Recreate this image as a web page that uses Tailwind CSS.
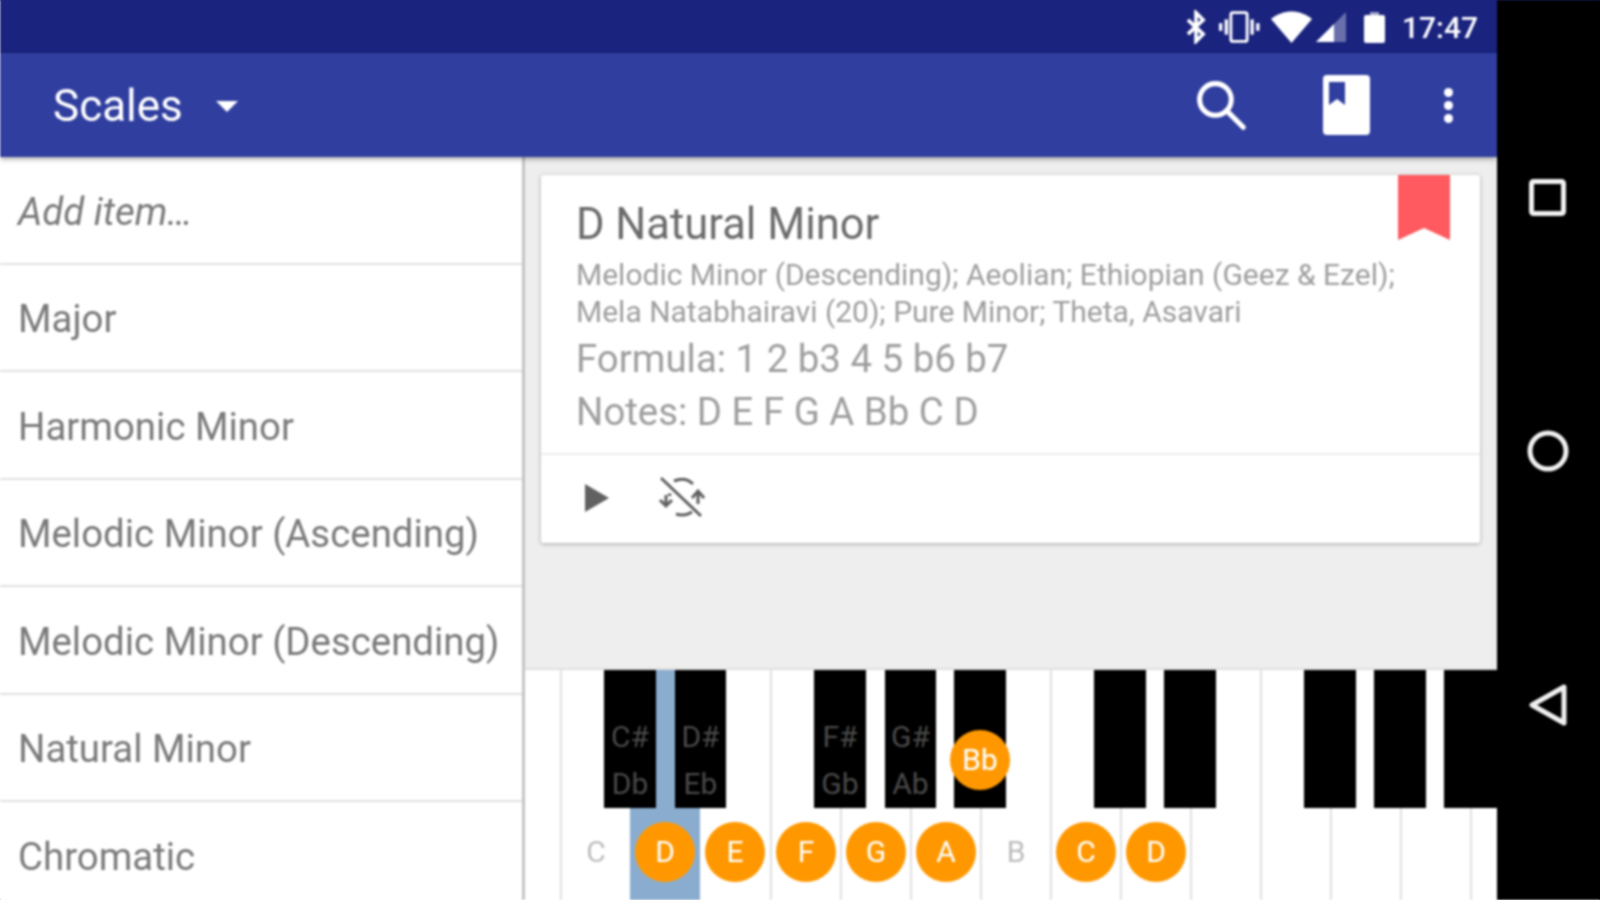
<!DOCTYPE html>
<html>
<head>
<meta charset="utf-8">
<script src="https://cdn.jsdelivr.net/npm/@tailwindcss/browser@4"></script>
</head>
<body class="h-[900px] overflow-hidden bg-black">
<div class="flex h-[900px] w-[1600px] overflow-hidden bg-black font-['Roboto',sans-serif] blur-[0.8px] shadow-[-6px_0_0_#ffffff,0_-6px_0_#1a237e,0_6px_0_#ffffff]">
  <div class="flex w-[1497px] flex-col">
    <div class="flex h-[53px] items-center justify-end bg-[#1a237e] pr-[19px] text-white">
      <svg class="mr-[11px]" width="22" height="34" viewBox="0 0 24 38" fill="none" stroke="white" stroke-width="4"><path d="M3 11 20 27 12 35V3l8 8L3 27"/></svg>
      <svg class="mr-[11px]" width="42" height="36" viewBox="0 0 44 36" fill="white"><rect x="13.500" y="3" width="17" height="30" rx="2" fill="none" stroke="white" stroke-width="3"/><rect x="7" y="10" width="3.500" height="16"/><rect x="34" y="10" width="3.500" height="16"/><rect x="1" y="14" width="3.500" height="8"/><rect x="40" y="14" width="3.500" height="8"/></svg>
      <svg class="mr-[4px]" width="41" height="32" viewBox="0 0 41 32" fill="white"><path d="M0 8C12-2 29-2 41 8L20.500 32Z"/></svg>
      <svg class="mr-[18px]" width="30" height="32" viewBox="0 0 30 32"><path d="M0 31 30 1V31Z" fill="white" fill-opacity=".35"/><path d="M0 31 18 13V31Z" fill="white"/></svg>
      <svg class="mr-[17px]" width="21" height="32" viewBox="0 0 21 32" fill="white"><path d="M6 1h9v3H6z" fill-opacity=".6"/><rect y="4" width="21" height="28" rx="2"/></svg>
      <span class="mt-[2px] text-[30px] font-medium leading-none">17:47</span>
    </div>
    <div class="relative z-10 flex h-[104px] items-center bg-[#303f9f] pl-[53px] text-white shadow-[0_2px_5px_rgba(0,0,0,0.35)]">
      <span class="mt-[2px] text-[44px] leading-none">Scales</span>
      <svg class="ml-[33px] mt-[2px]" width="22" height="11" viewBox="0 0 24 12" fill="white"><path d="M0 0H24L12 12Z"/></svg>
      <div class="ml-auto flex items-center">
        <svg class="mr-[76px]" width="52" height="52" viewBox="0 0 56 56" fill="none" stroke="white" stroke-width="5.500"><circle cx="22" cy="22" r="17"/><path d="M34 34 52 52" stroke-linecap="round"/></svg>
        <svg class="mr-[74px]" width="47" height="60" viewBox="0 0 47 60"><rect width="47" height="60" rx="4" fill="white"/><path d="M6 7H22V30L14 24 6 30Z" fill="#303f9f"/></svg>
        <div class="mr-[44px] flex flex-col gap-[4px]">
          <span class="h-[9px] w-[9px] rounded-full bg-white"></span>
          <span class="h-[9px] w-[9px] rounded-full bg-white"></span>
          <span class="h-[9px] w-[9px] rounded-full bg-white"></span>
        </div>
      </div>
    </div>
    <div class="flex h-[743px]">
      <div class="w-[525px] shrink-0 border-r-[3px] border-[#c4c4c4] bg-white text-[38.400px] text-[#7a7a7a]">
        <div class="flex h-[108px] items-center border-b-2 border-[#e0e0e0] pl-[18px] pt-[3px] italic">Add item…</div>
        <div class="flex h-[107.400px] items-center border-b-2 border-[#e0e0e0] pl-[18px] pt-[3px]">Major</div>
        <div class="flex h-[107.400px] items-center border-b-2 border-[#e0e0e0] pl-[18px] pt-[3px]">Harmonic Minor</div>
        <div class="flex h-[107.400px] items-center border-b-2 border-[#e0e0e0] pl-[18px] pt-[3px]">Melodic Minor (Ascending)</div>
        <div class="flex h-[107.400px] items-center border-b-2 border-[#e0e0e0] pl-[18px] pt-[3px]">Melodic Minor (Descending)</div>
        <div class="flex h-[107.400px] items-center border-b-2 border-[#e0e0e0] pl-[18px] pt-[3px]">Natural Minor</div>
        <div class="flex h-[107.400px] items-center pl-[18px] pt-[3px]">Chromatic</div>
      </div>
      <div class="flex min-w-0 flex-1 flex-col">
        <div class="h-[511px] bg-[#eeeeee] pl-[16px] pr-[17px] pt-[18px]">
          <div class="relative h-[368px] rounded-[3px] bg-white shadow-[0_1px_4px_rgba(0,0,0,0.3)]">
            <svg class="absolute right-[30px] top-0" width="52" height="65" viewBox="0 0 52 65" fill="#ff5a5f"><path d="M0 0H52V65L26 53 0 65Z"/></svg>
            <div class="h-[280px] border-b-2 border-[#eeeeee] pl-[35px] pr-[60px] pt-[25px]">
              <div class="text-[43.500px] leading-[50px] text-[#6b6b6b]">D Natural Minor</div>
              <div class="mt-[7px] text-[30px] leading-[36.500px] text-[#9e9e9e]">Melodic Minor (Descending); Aeolian; Ethiopian (Geez &amp; Ezel);<br>Mela Natabhairavi (20); Pure Minor; Theta, Asavari</div>
              <div class="mt-[2px] text-[38.400px] leading-[53px] text-[#9e9e9e]">Formula: 1 2 b3 4 5 b6 b7</div>
              <div class="text-[38.400px] leading-[53px] text-[#9e9e9e]">Notes: D E F G A Bb C D</div>
            </div>
            <div class="flex h-[86px] items-center pl-[44px]">
              <svg class="mr-[48px]" width="24" height="28" viewBox="0 0 24 28" fill="#616161"><path d="M0 0 24 14 0 28Z"/></svg>
              <svg width="48" height="44" viewBox="0 0 48 44" fill="none" stroke="#616161" stroke-width="3"><path d="M4 2 44 40"/><path d="M9 19V29M3 24 9 30 15 24"/><path d="M41 28V16M35 22 41 15 47 22"/><path d="M17 5C24 2 31 3 36 8"/><path d="M14 18C13 19 12 18 12 20"/><path d="M19 38C26 40 32 38 35 36"/></svg>
            </div>
          </div>
        </div>
        <div class="relative flex h-[232px] overflow-hidden border-t-2 border-[#e0e0e0] bg-white text-[30px] leading-none">
          <div class="w-[35px] shrink-0"></div>
          <div class="flex w-[70px] shrink-0 items-end justify-center border-l-2 border-[#e0e0e0] pb-[18px] text-[#bdbdbd]"><span class="flex h-[60px] items-center">C</span></div>
          <div class="flex w-[70px] shrink-0 items-end justify-center bg-[#8aaccf] pb-[18px] text-white"><span class="flex h-[60px] w-[60px] items-center justify-center rounded-full bg-[#ff9800]">D</span></div>
          <div class="flex w-[70px] shrink-0 items-end justify-center pb-[18px] text-white"><span class="flex h-[60px] w-[60px] items-center justify-center rounded-full bg-[#ff9800]">E</span></div>
          <div class="flex w-[70px] shrink-0 items-end justify-center border-l-2 border-[#e0e0e0] pb-[18px] text-white"><span class="flex h-[60px] w-[60px] items-center justify-center rounded-full bg-[#ff9800]">F</span></div>
          <div class="flex w-[70px] shrink-0 items-end justify-center border-l-2 border-[#e0e0e0] pb-[18px] text-white"><span class="flex h-[60px] w-[60px] items-center justify-center rounded-full bg-[#ff9800]">G</span></div>
          <div class="flex w-[70px] shrink-0 items-end justify-center border-l-2 border-[#e0e0e0] pb-[18px] text-white"><span class="flex h-[60px] w-[60px] items-center justify-center rounded-full bg-[#ff9800]">A</span></div>
          <div class="flex w-[70px] shrink-0 items-end justify-center border-l-2 border-[#e0e0e0] pb-[18px] text-[#bdbdbd]"><span class="flex h-[60px] items-center">B</span></div>
          <div class="flex w-[70px] shrink-0 items-end justify-center border-l-2 border-[#e0e0e0] pb-[18px] text-white"><span class="flex h-[60px] w-[60px] items-center justify-center rounded-full bg-[#ff9800]">C</span></div>
          <div class="flex w-[70px] shrink-0 items-end justify-center border-l-2 border-[#e0e0e0] pb-[18px] text-white"><span class="flex h-[60px] w-[60px] items-center justify-center rounded-full bg-[#ff9800]">D</span></div>
          <div class="w-[70px] shrink-0 border-l-2 border-[#e0e0e0]"></div>
          <div class="w-[70px] shrink-0 border-l-2 border-[#e0e0e0]"></div>
          <div class="w-[70px] shrink-0 border-l-2 border-[#e0e0e0]"></div>
          <div class="w-[70px] shrink-0 border-l-2 border-[#e0e0e0]"></div>
          <div class="w-[70px] shrink-0 border-l-2 border-[#e0e0e0]"></div>

          <div class="absolute left-[79px] top-0 flex h-[138px] w-[52px] flex-col items-center justify-end gap-[17px] bg-black pb-[9px] text-[#4a4a4a]"><span>C#</span><span>Db</span></div>
          <div class="absolute left-[150px] top-0 flex h-[138px] w-[51px] flex-col items-center justify-end gap-[17px] bg-black pb-[9px] text-[#4a4a4a]"><span>D#</span><span>Eb</span></div>
          <div class="absolute left-[289px] top-0 flex h-[138px] w-[52px] flex-col items-center justify-end gap-[17px] bg-black pb-[9px] text-[#4a4a4a]"><span>F#</span><span>Gb</span></div>
          <div class="absolute left-[360px] top-0 flex h-[138px] w-[51px] flex-col items-center justify-end gap-[17px] bg-black pb-[9px] text-[#4a4a4a]"><span>G#</span><span>Ab</span></div>
          <div class="absolute left-[429px] top-0 h-[138px] w-[52px] bg-black"></div>
          <div class="absolute left-[569px] top-0 h-[138px] w-[52px] bg-black"></div>
          <div class="absolute left-[639px] top-0 h-[138px] w-[52px] bg-black"></div>
          <div class="absolute left-[779px] top-0 h-[138px] w-[52px] bg-black"></div>
          <div class="absolute left-[849px] top-0 h-[138px] w-[52px] bg-black"></div>
          <div class="absolute left-[919px] top-0 h-[138px] w-[53px] bg-black"></div>
          <span class="absolute left-[425px] top-[60px] flex h-[60px] w-[60px] items-center justify-center rounded-full bg-[#ff9800] text-white">Bb</span>
        </div>
      </div>
    </div>
  </div>
  <div class="flex w-[103px] flex-col items-center bg-black pr-[2px] pt-[179px]">
    <svg width="37" height="37" viewBox="0 0 37 37" fill="none" stroke="#f0f0f0" stroke-width="5"><rect x="2.500" y="2.500" width="32" height="32" rx="2"/></svg>
    <svg class="mt-[214px]" width="42" height="42" viewBox="0 0 42 42" fill="none" stroke="#f0f0f0" stroke-width="5"><circle cx="21" cy="21" r="18"/></svg>
    <svg class="mt-[212px]" width="38" height="42" viewBox="0 0 38 42" fill="none" stroke="#f0f0f0" stroke-width="5" stroke-linejoin="round"><path d="M35 3V39L3 21Z"/></svg>
  </div>
</div>
</body>
</html>
